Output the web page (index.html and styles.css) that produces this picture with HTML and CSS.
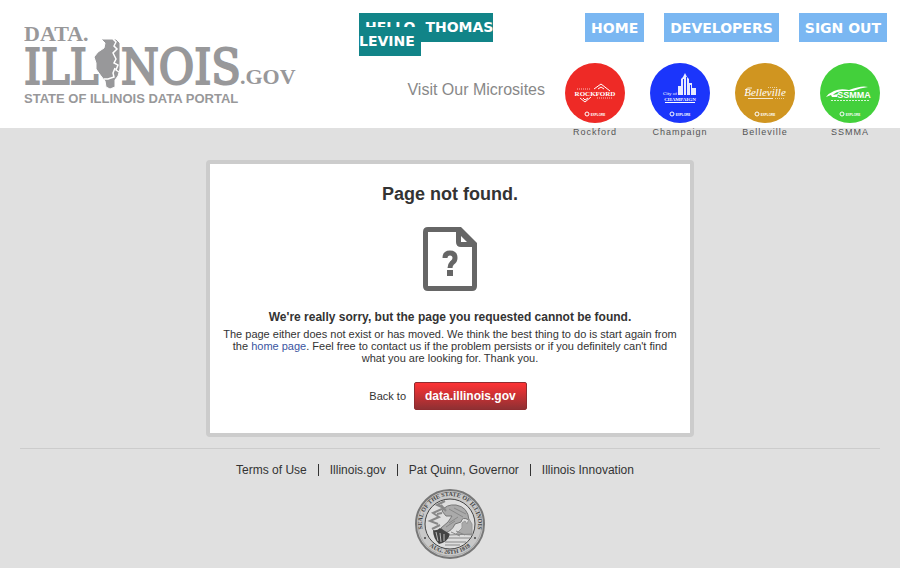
FILE: index.html
```html
<!DOCTYPE html>
<html lang="en">
<head>
<meta charset="utf-8">
<meta name="viewport" content="width=device-width, initial-scale=1">
<title>Page not found | Data.Illinois.gov</title>
<link rel="stylesheet" href="styles.css">
</head>
<body>
<header class="site-header">
  <a class="logo" href="#" aria-label="Data.Illinois.gov">
    <svg width="280" height="84" viewBox="0 0 280 84" fill="#98989a">
      <text class="logo-data" x="0" y="19">DATA.</text>
      <text class="logo-name" x="0" y="62">ILL</text>
      <text class="logo-name" x="97" y="62">NOIS</text>
      <text class="logo-gov" x="216" y="62">.GOV</text>
      <path stroke="#fff" stroke-width="1" d="M77 17H92L96 21V47L94 54L91 58L91 65L86 67L82 65L81 59L77 54L72 47V41L70 35L74 30L80 26L81 21Z"/>
      <path fill="none" stroke="#fff" stroke-width="1.5" d="M89 17L92 20L90 24L93 27L89 31L92 37L90 41L94 43L92 48L95 50M91 46L89 51L90 55L84 57L80 57"/>
      <text class="logo-tagline" x="0" y="81">STATE OF ILLINOIS DATA PORTAL</text>
    </svg>
  </a>
  <div class="header-tools">
    <div class="account-row">
      <p class="greeting"><span class="greeting-name">HELLO, THOMAS LEVINE</span></p>
      <nav class="main-nav">
        <a href="#">HOME</a>
        <a href="#">DEVELOPERS</a>
        <a href="#">SIGN OUT</a>
      </nav>
    </div>
    <div class="microsites">
      <span class="microsites-title">Visit Our Microsites</span>
      <a class="microsite" href="#">
        <svg width="60" height="60" viewBox="0 0 60 60">
          <circle cx="30" cy="30" r="30" fill="#ee2a26"/>
          <g fill="none" stroke="#fff"><path d="M29 26L36 21L45 28M33 26L36 24L39 26M15 35L20 39L26 34M18 35L20 37L23 35"/><path stroke-width="1" stroke-dasharray="1 1" opacity=".7" d="M12 26H26M32 35H48"/></g>
          <text class="badge-serif badge-bold" x="30" y="33" font-size="7">ROCKFORD</text>
          <circle cx="22" cy="51" r="2" fill="none" stroke="#fff"/><text class="badge-explore" x="33" y="53">EXPLORE</text>
        </svg>
        <span>Rockford</span>
      </a>
      <a class="microsite" href="#">
        <svg width="60" height="60" viewBox="0 0 60 60">
          <circle cx="30" cy="30" r="30" fill="#1b35fb"/>
          <path fill="#fff" opacity=".9" d="M28 32V23H31V16L33 14L35 10L37 14L39 16V20H42V25H46V32Z"/>
          <path fill="none" stroke="#1b35fb" d="M33.500 16V32M36.500 14V32M40.500 22V32"/>
          <path stroke="#fff" d="M15 39.500H45"/>
          <text class="badge-serif" x="20" y="32" font-size="5">City of</text>
          <text class="badge-serif badge-bold" x="30" y="38" font-size="5">CHAMPAIGN</text>
          <circle cx="22" cy="51" r="2" fill="none" stroke="#fff"/><text class="badge-explore" x="33" y="53">EXPLORE</text>
        </svg>
        <span>Champaign</span>
      </a>
      <a class="microsite" href="#">
        <svg width="60" height="60" viewBox="0 0 60 60">
          <circle cx="30" cy="30" r="30" fill="#d09520"/>
          <text class="badge-serif badge-script" x="30" y="33" font-size="11">Belleville</text>
          <path fill="none" stroke="#fff" opacity=".8" d="M13 35.500H38M10 27Q12 24 17 25"/>
          <path stroke="#fff" stroke-dasharray="1 1" opacity=".6" d="M33 24.500H43M40 35.500H50"/>
          <circle cx="22" cy="51" r="2" fill="none" stroke="#fff"/><text class="badge-explore" x="33" y="53">EXPLORE</text>
        </svg>
        <span>Belleville</span>
      </a>
      <a class="microsite" href="#">
        <svg width="60" height="60" viewBox="0 0 60 60">
          <circle cx="30" cy="30" r="30" fill="#43d03b"/>
          <path fill="#fff" d="M6 34Q9 30 14 28Q20 25 29 27Q42 22 48 24Q40 25 33 28L22 28Q15 29 13 32L18 31L17 34L12 34L11 32Z"/>
          <text class="badge-sans" x="34" y="35">SSMMA</text>
          <path stroke="#fff" stroke-dasharray="2 1" opacity=".8" d="M11 37.500H50"/>
          <circle cx="22" cy="51" r="2" fill="none" stroke="#fff"/><text class="badge-explore" x="33" y="53">EXPLORE</text>
        </svg>
        <span>SSMMA</span>
      </a>
    </div>
  </div>
</header>

<main class="error-card">
  <h1>Page not found.</h1>
  <svg class="missing-icon" width="54" height="64" viewBox="0 0 54 64" aria-hidden="true">
    <path fill="#666" fill-rule="evenodd" d="M5 0H38L54 16V59Q54 64 49 64H5Q0 64 0 59V5Q0 0 5 0ZM5 5V59H49V20H38Q33 20 33 15V5ZM38 9V15H44Z"/>
    <path fill="none" stroke="#666" stroke-width="5" d="M22 31Q22 26 27 26Q32 26 32 31Q32 34 29 36Q27 38 27 41"/>
    <path fill="#666" d="M24 43H30V49H24Z"/>
  </svg>
  <h2>We're really sorry, but the page you requested cannot be found.</h2>
  <p class="explanation">The page either does not exist or has moved. We think the best thing to do is start again from the <a href="#">home page</a>. Feel free to contact us if the problem persists or if you definitely can't find what you are looking for. Thank you.</p>
  <div class="back-row">
    <span>Back to</span>
    <a class="back-button" href="#">data.illinois.gov</a>
  </div>
</main>

<footer class="site-footer">
  <nav class="footer-links">
    <a href="#">Terms of Use</a>
    <a href="#">Illinois.gov</a>
    <a href="#">Pat Quinn, Governor</a>
    <a href="#">Illinois Innovation</a>
  </nav>
  <svg class="seal" width="70" height="70" viewBox="0 0 70 70" role="img" aria-label="Seal of the State of Illinois">
    <defs>
      <path id="seal-top" d="M10.200 48A28 28 0 1 1 59.800 48"/>
      <path id="seal-bottom" d="M8 50A32 32 0 0 0 62 50"/>
    </defs>
    <circle cx="35" cy="35" r="34" fill="#c8c8c8" stroke="#777" stroke-width="2"/>
    <circle cx="35" cy="35" r="32" fill="none" stroke="#aaa"/>
    <circle cx="35" cy="35" r="25" fill="#dedede" stroke="#444"/>
    <text class="seal-text"><textPath href="#seal-top" startOffset="50%">SEAL OF THE STATE OF ILLINOIS</textPath></text>
    <text class="seal-text"><textPath href="#seal-bottom" startOffset="50%">AUG. 26TH 1818</textPath></text>
    <circle cx="10" cy="49" r="1" fill="#444"/><circle cx="60" cy="49" r="1" fill="#444"/>
    <path fill="#aaa" stroke="#777" d="M27 22Q31 15 41 16Q53 18 54 31Q47 27 46 33L40 35Q37 42 30 44L26 39L33 33L37 27L31 27Z"/>
    <path fill="none" stroke="#888" d="M34 20L48 28M39 19L51 25M34 34L43 28M31 38L40 32"/>
    <path fill="none" stroke="#888" stroke-width="2" d="M30 12L22 16L29 19L18 24L24 28L15 32L23 35M17 40L25 36M26 16L31 22M22 25L27 24"/>
    <path fill="#aaa" stroke="#999" d="M41 45L47 39V34L50 32L52 35L54 30L57 35V46Z"/>
    <path fill="#444" d="M18 41Q22 42 25 39L35 45Q33 53 24 55Q18 49 18 41Z"/>
    <path fill="none" stroke="#bbb" d="M21 43L23 52M25 44L26 53M29 45L29 52"/>
    <path fill="none" stroke="#888" d="M34 46L58 45M33 49L55 49M30 53L51 53M30 56H45M36 43L45 47M41 42L50 46"/>
  </svg>
</footer>
</body>
</html>
```
FILE: styles.css
```css
* {
  box-sizing: border-box;
}

body {
  margin: 0;
  background: #e0e0e0;
  color: #333;
  font: 11px/12px "Liberation Sans", Arial, sans-serif;
}

a {
  color: inherit;
  text-decoration: none;
}

/* Header */
.site-header {
  display: flex;
  justify-content: space-between;
  min-height: 128px;
  padding: 20px 13px 0 24px;
  background: #fff;
}

.logo svg {
  display: block;
  margin-top: 2px;
}

.logo-data,
.logo-gov {
  font: bold 22px "Liberation Serif", serif;
}

.logo-name {
  font: 48px "DejaVu Serif Condensed", "DejaVu Serif", serif;
  font-stretch: condensed;
  stroke: #98989a;
  stroke-width: 2px;
}

.logo-tagline {
  font: bold 13px "Liberation Sans", Arial, sans-serif;
}

.header-tools {
  width: 528px;
}

.account-row {
  display: flex;
  justify-content: space-between;
  height: 43px;
  font: bold 14px/14px "DejaVu Sans", Verdana, sans-serif;
  color: #fff;
}

.greeting {
  width: 180px;
  margin: 0;
}

.greeting-name {
  padding: 6px 6px 7px;
  background: #118488;
}

.main-nav {
  display: flex;
  align-items: flex-start;
  gap: 20px;
}

.main-nav a {
  margin-top: -7px;
  padding: 8px 6px 7px;
  background: #7ab7f2;
}

.microsites {
  display: flex;
  justify-content: flex-end;
  gap: 25px;
  margin-right: 7px;
}

.microsites-title {
  margin-right: -5px;
  padding-top: 18px;
  color: #888;
  font-size: 16px;
  line-height: 18px;
}

.microsite {
  display: flex;
  flex-direction: column;
  align-items: center;
  width: 60px;
  margin-bottom: -12px;
  color: #555;
  font-size: 9px;
  line-height: 10px;
  letter-spacing: 1px;
}

.microsite svg {
  margin-bottom: 4px;
  letter-spacing: 0;
}

.microsite text {
  fill: #fff;
  text-anchor: middle;
}

.badge-serif {
  font-family: "Liberation Serif", serif;
}

.badge-bold {
  font-weight: bold;
}

.badge-script {
  font-style: italic;
}

.badge-sans {
  font: bold 9px "Liberation Sans", Arial, sans-serif;
}

.badge-explore {
  font: bold 3px "Liberation Sans", Arial, sans-serif;
}

/* Error message */
.error-card {
  max-width: 488px;
  margin: 32px auto 11px;
  padding: 20px 12px 23px;
  border: 4px solid #ccc;
  border-radius: 4px;
  background: #fff;
  text-align: center;
}

h1 {
  margin: 0 0 23px;
  font-size: 18px;
  line-height: 20px;
}

.missing-icon {
  display: block;
  margin: 0 auto 20px;
}

h2 {
  margin: 0 0 5px;
  font-size: 12px;
  line-height: 12px;
}

.explanation {
  margin: 0 0 18px;
}

.explanation a {
  color: #3a559f;
}

.back-row {
  display: flex;
  align-items: center;
  justify-content: center;
  gap: 8px;
  padding-right: 4px;
}

.back-button {
  padding: 6px 10px;
  border: 1px solid #8f2c30;
  border-radius: 2px;
  background: linear-gradient(#fe3234, #8f3033);
  color: #fff;
  font-size: 12px;
  font-weight: bold;
  line-height: 14px;
}

/* Footer */
.site-footer {
  margin: 0 20px;
  padding: 14px 0 9px;
  border-top: 1px solid #ccc;
}

.footer-links {
  display: flex;
  justify-content: center;
  margin-right: 30px;
  font-size: 12px;
  line-height: 14px;
}

.footer-links a + a {
  margin-left: 11px;
}

.footer-links a + a::before {
  content: "";
  display: inline-block;
  width: 1px;
  height: 12px;
  margin-right: 11px;
  background: #333;
  vertical-align: -2px;
}

.seal {
  display: block;
  margin: 12px auto 0;
}

.seal-text {
  fill: #444;
  font: bold 6px "Liberation Serif", serif;
  text-anchor: middle;
}
```
